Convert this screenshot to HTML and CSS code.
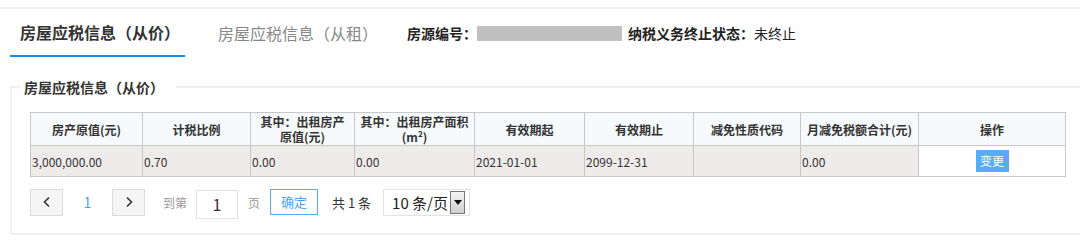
FILE: index.html
```html
<!DOCTYPE html>
<html lang="zh">
<head>
<meta charset="utf-8">
<title>房屋应税信息</title>
<link rel="stylesheet" href="styles.css">
</head>
<body>
<div class="page">
  <div class="tabs">
    <div class="tab active">房屋应税信息（从价）</div>
    <div class="tab">房屋应税信息（从租）</div>
    <div class="info">
      <span class="label">房源编号：</span><span class="mask"></span>
      <span class="label second">纳税义务终止状态：</span><span class="value">未终止</span>
    </div>
  </div>

  <fieldset class="box">
    <legend class="legend">房屋应税信息（从价）</legend>
    <table class="grid">
      <colgroup>
        <col class="c1"><col class="c2"><col class="c3"><col class="c4"><col class="c5"><col class="c6"><col class="c7"><col class="c8"><col class="c9">
      </colgroup>
      <thead>
        <tr>
          <th>房产原值(元)</th>
          <th>计税比例</th>
          <th>其中：出租房产<br>原值(元)</th>
          <th>其中：出租房产面积<br>(m²)</th>
          <th>有效期起</th>
          <th>有效期止</th>
          <th>减免性质代码</th>
          <th class="nowrap">月减免税额合计(元)</th>
          <th>操作</th>
        </tr>
      </thead>
      <tbody>
        <tr>
          <td>3,000,000.00</td>
          <td>0.70</td>
          <td>0.00</td>
          <td>0.00</td>
          <td>2021-01-01</td>
          <td>2099-12-31</td>
          <td></td>
          <td>0.00</td>
          <td class="op"><span class="btn-edit">变更</span></td>
        </tr>
      </tbody>
    </table>

    <div class="pager">
      <span class="pbtn">
        <svg width="10" height="12" viewBox="0 0 10 12"><path d="M7 1.5 L2.5 6 L7 10.5" fill="none" stroke="#333" stroke-width="1.6"/></svg>
      </span>
      <span class="pnum">1</span>
      <span class="pbtn">
        <svg width="10" height="12" viewBox="0 0 10 12"><path d="M3 1.5 L7.5 6 L3 10.5" fill="none" stroke="#333" stroke-width="1.6"/></svg>
      </span>
      <span class="ptext goto">到第</span>
      <span class="pinput">1</span>
      <span class="ptext">页</span>
      <span class="pok">确定</span>
      <span class="ptotal">共 1 条</span>
      <span class="psel">
        <span class="psel-text">10 条/页</span>
        <span class="psel-arrow"><svg width="8" height="5" viewBox="0 0 8 5"><path d="M0 0 H8 L4 5 Z" fill="#111"/></svg></span>
      </span>
    </div>
  </fieldset>
</div>
</body>
</html>
```

FILE: styles.css
```css
html, body {
  margin: 0;
  padding: 0;
  background: #ffffff;
}
body {
  font-family: "Noto Sans CJK SC", "Noto Sans", sans-serif;
  color: #333;
  width: 1080px;
  height: 252px;
  overflow: hidden;
}
.page {
  margin-top: 7px;
  border-top: 2px solid #f1f1f1;
}
.tabs {
  display: flex;
  align-items: stretch;
  height: 48px;
}
.tab {
  display: flex;
  align-items: center;
  font-size: 16px;
  color: #888;
  margin-left: 33px;
}
.tab.active {
  margin-left: 10px;
  width: 175px;
  box-sizing: border-box;
  padding-left: 10px;
  color: #333;
  font-weight: bold;
  border-bottom: 2px solid #1e88e5;
}
.info {
  display: flex;
  align-items: center;
  margin-left: 29px;
  font-size: 14px;
  color: #222;
}
.label {
  font-weight: bold;
}
.label.second {
  margin-left: 6px;
}
.mask {
  display: inline-block;
  width: 145px;
  height: 15px;
  background: #c0c0c0;
}
.box {
  margin: 20px 0 0 10px;
  padding: 0 13px 16px 18px;
  border: 2px solid #f0f0f0;
  border-right: none;
  min-width: 0;
}
.legend {
  margin-left: -10px;
  padding: 0 12px 0 4px;
  font-size: 14px;
  font-weight: bold;
  line-height: 20px;
  color: #333;
}
.grid {
  margin-top: 15px;
  width: 1035px;
  border-collapse: collapse;
  table-layout: fixed;
  font-size: 12px;
}
.c1 { width: 112px; }
.c2 { width: 108px; }
.c3 { width: 104px; }
.c4 { width: 120px; }
.c5 { width: 110px; }
.c6 { width: 109px; }
.c7 { width: 107px; }
.c8 { width: 118px; }
.c9 { width: 147px; }
.grid th, .grid td {
  border: 1px solid #c8c8c8;
}
.grid th {
  background: #f6fafd;
  height: 32px;
  padding: 0 2px;
  font-weight: bold;
  line-height: 15px;
  text-align: center;
  color: #333;
}
.grid th.nowrap {
  white-space: nowrap;
}
.grid td {
  background: #efebeb;
  height: 30px;
  padding: 0 1px;
  text-align: left;
  color: #333;
}
.grid td.op {
  background: #fff;
  text-align: center;
}
.btn-edit {
  display: inline-block;
  width: 33px;
  height: 22px;
  line-height: 22px;
  background: #58acf4;
  color: #fff;
  font-size: 12px;
  text-align: center;
}
.pager {
  display: flex;
  align-items: center;
  margin-top: 10px;
  height: 30px;
}
.pbtn {
  display: flex;
  align-items: center;
  justify-content: center;
  width: 31px;
  height: 25px;
  border: 1px solid #dcdcdc;
  background: #f5f5f5;
}
.pnum {
  width: 49px;
  text-align: center;
  font-size: 14px;
  color: #4aa3f0;
}
.ptext {
  font-size: 12px;
  color: #999;
}
.goto {
  margin-left: 18px;
}
.pinput {
  margin: 5px 10px 0 9px;
  width: 40px;
  height: 27px;
  box-sizing: content-box;
  border: 1px solid #e3e3e3;
  text-align: center;
  font-size: 16px;
  line-height: 27px;
  color: #333;
}
.pok {
  margin-left: 10px;
  width: 46px;
  height: 24px;
  border: 1px solid #58acf4;
  text-align: center;
  line-height: 24px;
  font-size: 13px;
  color: #4aa3f0;
}
.ptotal {
  margin-left: 14px;
  font-size: 13px;
  color: #333;
}
.psel {
  display: flex;
  align-items: center;
  margin-left: 12px;
  width: 87px;
  height: 27px;
  box-sizing: border-box;
  border: 1px solid #e3e3e3;
  padding: 0 4px 0 8px;
}
.psel-text {
  font-size: 15px;
  color: #222;
  white-space: nowrap;
}
.psel-arrow {
  display: flex;
  align-items: center;
  justify-content: center;
  margin-left: auto;
  width: 13px;
  height: 21px;
  border: 1px solid #777;
  background: linear-gradient(#f4f4f4, #cfcfcf);
}
```
